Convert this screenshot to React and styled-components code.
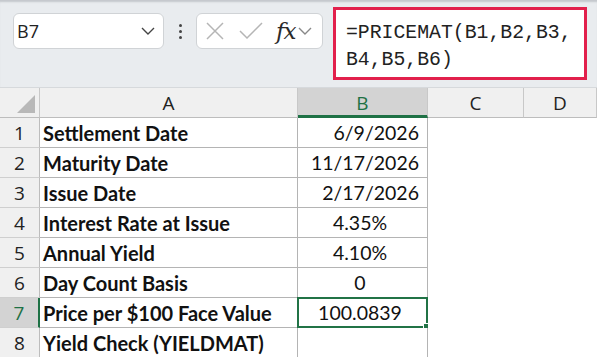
import React from 'react';
import styled, { createGlobalStyle } from 'styled-components';

const GlobalStyle = createGlobalStyle`
  html, body { margin: 0; padding: 0; background: #ffffff; }
  body { width: 597px; height: 357px; overflow: hidden; font-family: Lato, "Noto Sans", sans-serif; }
`;

const Page = styled.div`
  width: 597px;
  height: 357px;
  overflow: hidden;
  background: #ffffff;
`;

const Toolbar = styled.div`
  height: 88px;
  display: flex;
  align-items: flex-start;
  padding: 7px 0 0 13px;
  box-sizing: border-box;
  background: #e9ecef;
  border-bottom: 1px solid #d6d9dc;
  box-shadow: inset 0 3px 2px -1px #c4c8cc;
`;

const Box = styled.div`
  margin-top: 6px;
  height: 36px;
  width: ${(p) => p.w}px;
  box-sizing: border-box;
  background: #ffffff;
  border: 1px solid #d0d3d6;
  border-radius: 6px;
  display: flex;
  align-items: center;
`;

const NameText = styled.span`
  flex: 1;
  padding-left: 3px;
  font-family: "Open Sans", "Noto Sans", sans-serif;
  font-size: 18px;
  color: #222;
`;

const Dots = styled.div`
  width: 32px;
  margin-top: 6px;
  height: 36px;
  display: flex;
  flex-direction: column;
  align-items: center;
  justify-content: center;
  gap: 3px;
  span {
    width: 3px;
    height: 3px;
    border-radius: 50%;
    background: #444;
  }
`;

const IconSlot = styled.span`
  display: flex;
  align-items: center;
  justify-content: center;
  width: ${(p) => p.w}px;
  margin-left: ${(p) => p.ml || 0}px;
`;

const Fx = styled.span`
  font-family: "DejaVu Serif", "Liberation Serif", serif;
  font-style: italic;
  font-size: 23px;
  color: #2a2a2a;
  letter-spacing: -1px;
  margin-left: 13px;
  line-height: 1;
`;

const FormulaBar = styled.div`
  margin-left: 10px;
  width: 254px;
  height: 73px;
  box-sizing: border-box;
  border: 3px solid #e2204c;
  background: #ffffff;
  padding: 10px 0 0 10px;
  font-family: "Liberation Mono", "DejaVu Sans Mono", monospace;
  font-size: 19.8px;
  line-height: 27px;
  color: #222;
  white-space: pre;
`;

const Grid = styled.div`
  display: grid;
  grid-template-columns: 40px 258px 130px 96px 73px;
  grid-template-rows: 30px;
  grid-auto-rows: 30px;
`;

const ColHead = styled.div`
  box-sizing: border-box;
  background: ${(p) => (p.active ? '#d3d3d3' : '#f0f0f0')};
  color: ${(p) => (p.active ? '#1e7145' : '#222')};
  border-right: 1px solid #c8c8c8;
  border-bottom: ${(p) => (p.active ? '3px solid #1e7145' : '1px solid #bdbdbd')};
  display: flex;
  align-items: center;
  justify-content: center;
  font-size: 19px;
  font-family: "Open Sans", "Noto Sans", sans-serif;
  padding-top: ${(p) => (p.active ? '2px' : 0)};
`;

const Corner = styled(ColHead)`
  position: relative;
  &::after {
    content: '';
    position: absolute;
    right: 4px;
    bottom: 4px;
    width: 0;
    height: 0;
    border-left: 18px solid transparent;
    border-bottom: 18px solid #b8b8b8;
  }
`;

const RowHead = styled.div`
  box-sizing: border-box;
  background: ${(p) => (p.active ? '#d3d3d3' : '#f0f0f0')};
  color: ${(p) => (p.active ? '#1e7145' : '#222')};
  border-bottom: 1px solid #cfcfcf;
  border-right: ${(p) => (p.active ? '2px solid #1e7145' : '1px solid #bdbdbd')};
  display: flex;
  align-items: center;
  justify-content: center;
  font-size: 19px;
  font-family: "Open Sans", "Noto Sans", sans-serif;
`;

const Cell = styled.div`
  position: relative;
  box-sizing: border-box;
  background: #ffffff;
  border-right: ${(p) => (p.lined ? '1px solid #b4b4b4' : 'none')};
  border-bottom: ${(p) => (p.lined ? '1px solid #b4b4b4' : 'none')};
  display: flex;
  align-items: center;
  justify-content: ${(p) => p.align || 'flex-start'};
  padding: 0 8px 0 3px;
  font-family: Lato, "Noto Sans", sans-serif;
  font-size: ${(p) => (p.bold ? 20 : 19.5)}px;
  font-weight: ${(p) => (p.bold ? 700 : 400)};
  color: #111;
  white-space: nowrap;
  ${(p) =>
    p.selected &&
    `
    &::before {
      content: '';
      position: absolute;
      left: -1px; top: -1px; right: -1px; bottom: -1px;
      border: 2px solid #217346;
    }
    &::after {
      content: '';
      position: absolute;
      right: -4px; bottom: -4px;
      width: 6px; height: 6px;
      background: #217346;
      border: 1px solid #ffffff;
    }
  `}
`;

const rows = [
  ['Settlement Date', '6/9/2026', 'flex-end'],
  ['Maturity Date', '11/17/2026', 'flex-end'],
  ['Issue Date', '2/17/2026', 'flex-end'],
  ['Interest Rate at Issue', '4.35%', 'center'],
  ['Annual Yield', '4.10%', 'center'],
  ['Day Count Basis', '0', 'center'],
  ['Price per $100 Face Value', '100.0839', 'center'],
  ['Yield Check (YIELDMAT)', '', 'center'],
];

function Chevron({ color = '#555' }) {
  return (
    <svg width="14" height="8" viewBox="0 0 14 8">
      <path d="M1 1 L7 7 L13 1" fill="none" stroke={color} strokeWidth="1.4" />
    </svg>
  );
}

export default function App() {
  return (
    <Page>
      <GlobalStyle />
      <Toolbar>
        <Box w={151}>
          <NameText>B7</NameText>
          <IconSlot w={30}>
            <Chevron color="#444" />
          </IconSlot>
        </Box>
        <Dots>
          <span />
          <span />
          <span />
        </Dots>
        <Box w={127}>
          <IconSlot w={18} ml={9}>
            <svg width="18" height="18" viewBox="0 0 18 18">
              <path d="M1 1 L17 17 M17 1 L1 17" stroke="#b5b5b5" strokeWidth="1.5" />
            </svg>
          </IconSlot>
          <IconSlot w={24} ml={15}>
            <svg width="24" height="18" viewBox="0 0 24 18">
              <path d="M1 9 L8 16 L23 1" fill="none" stroke="#b5b5b5" strokeWidth="1.5" />
            </svg>
          </IconSlot>
          <Fx>fx</Fx>
          <IconSlot w={14} ml={3}>
            <Chevron color="#888" />
          </IconSlot>
        </Box>
        <FormulaBar>{'=PRICEMAT(B1,B2,B3,\nB4,B5,B6)'}</FormulaBar>
      </Toolbar>
      <Grid>
        <Corner />
        <ColHead>A</ColHead>
        <ColHead active>B</ColHead>
        <ColHead>C</ColHead>
        <ColHead>D</ColHead>
        {rows.map(([label, value, align], i) => (
          <React.Fragment key={label}>
            <RowHead active={i === 6}>{i + 1}</RowHead>
            <Cell lined bold>
              {label}
            </Cell>
            <Cell lined align={align} selected={i === 6}>
              {value}
            </Cell>
            <Cell />
            <Cell />
          </React.Fragment>
        ))}
      </Grid>
    </Page>
  );
}
